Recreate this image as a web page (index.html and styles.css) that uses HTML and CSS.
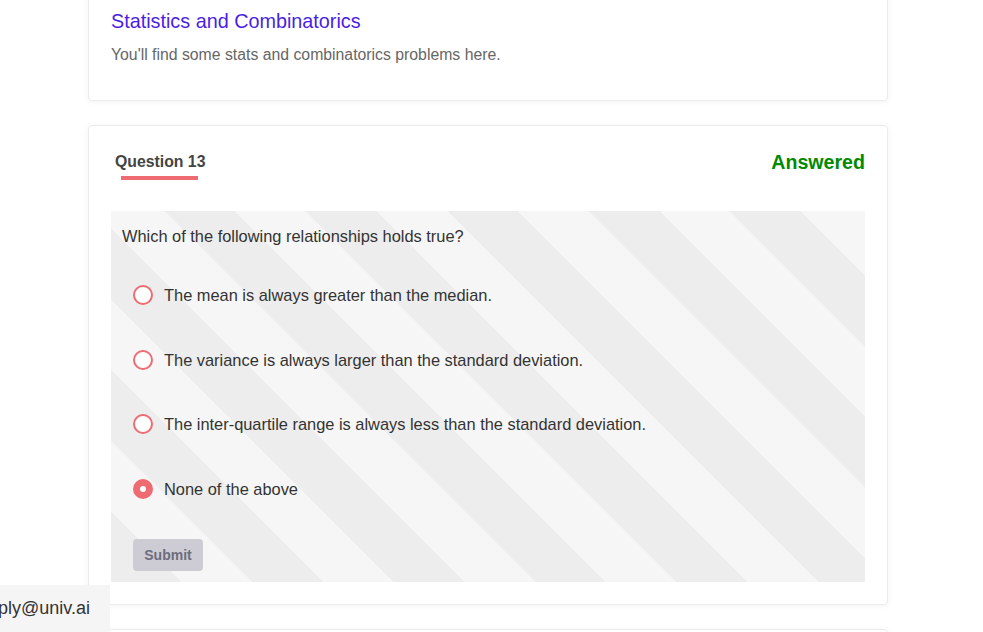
FILE: index.html
```html
<!DOCTYPE html>
<html lang="en">
<head>
<meta charset="utf-8">
<title>Statistics and Combinatorics</title>
<link rel="stylesheet" href="styles.css">
</head>
<body>
<main class="page">
  <section class="card intro">
    <h2 class="intro-title">Statistics and Combinatorics</h2>
    <p class="intro-desc">You'll find some stats and combinatorics problems here.</p>
  </section>

  <section class="card question-card">
    <header class="q-header">
      <div class="q-tab">
        <span class="q-label">Question 13</span>
        <span class="q-underline"></span>
      </div>
      <span class="q-status">Answered</span>
    </header>
    <div class="q-body">
      <p class="q-text">Which of the following relationships holds true?</p>
      <ul class="options">
        <li class="option"><span class="radio"></span><span>The mean is always greater than the median.</span></li>
        <li class="option"><span class="radio"></span><span>The variance is always larger than the standard deviation.</span></li>
        <li class="option"><span class="radio"></span><span>The inter-quartile range is always less than the standard deviation.</span></li>
        <li class="option"><span class="radio checked"></span><span>None of the above</span></li>
      </ul>
      <button class="submit" type="button">Submit</button>
    </div>
  </section>

  <section class="card next-card"></section>
</main>
<div class="contact"><span>noreply@univ.ai</span></div>
</body>
</html>
```

FILE: styles.css
```css
* { box-sizing: border-box; }
html, body { margin: 0; padding: 0; background: #fff; overflow: hidden; }
body {
  font-family: "Liberation Sans", Arial, sans-serif;
  color: #333;
  height: 632px;
}
.page {
  width: 800px;
  margin-left: 88px;
  display: flex;
  flex-direction: column;
  gap: 24px;
}
.card {
  background: #fff;
  border: 1px solid #ececec;
  border-radius: 4px;
  box-shadow: 0 1px 6px rgba(0, 0, 0, 0.05);
}
.intro {
  margin-top: -20px;
  padding: 28px 22px 35px;
}
.intro-title {
  margin: 0;
  font-size: 19.8px;
  line-height: 24px;
  font-weight: normal;
  color: #4a1ee6;
}
.intro-desc {
  margin: 12px 0 0;
  font-size: 15.8px;
  line-height: 20px;
  color: #666;
}
.question-card {
  padding: 26px 22px 22px;
}
.q-header {
  display: flex;
  justify-content: space-between;
  align-items: flex-start;
  margin-bottom: 31px;
}
.q-tab {
  display: flex;
  flex-direction: column;
  padding-left: 4px;
}
.q-label {
  font-size: 15.8px;
  line-height: 20px;
  font-weight: bold;
  color: #444;
}
.q-underline {
  display: block;
  margin: 4px 0 0 6px;
  width: 77px;
  height: 4px;
  background: #ef6b72;
}
.q-status {
  font-size: 19.6px;
  line-height: 20px;
  font-weight: bold;
  color: #008a00;
}
.q-body {
  padding: 15px 11px 11px;
  background: repeating-linear-gradient(45deg, #ededed 0 50px, #f6f6f6 50px 100px);
}
.q-text {
  margin: 0;
  font-size: 16.4px;
  line-height: 20px;
  color: #333;
}
.options {
  list-style: none;
  margin: 39px 0 0;
  padding: 0 0 0 11px;
  display: flex;
  flex-direction: column;
  gap: 44.6px;
}
.option {
  display: flex;
  align-items: center;
  gap: 11px;
  height: 20px;
  font-size: 16.4px;
  line-height: 20px;
  color: #333;
}
.radio {
  flex: none;
  width: 20px;
  height: 20px;
  border: 2px solid #ef6b72;
  border-radius: 50%;
  background: #fff;
  display: flex;
  align-items: center;
  justify-content: center;
}
.radio.checked {
  background: #ef6b72;
}
.radio.checked::after {
  content: "";
  width: 6px;
  height: 6px;
  border-radius: 50%;
  background: #fff;
}
.submit {
  display: block;
  margin: 40px 0 0 11px;
  width: 70px;
  height: 32px;
  border: none;
  border-radius: 4px;
  background: #cdccd4;
  color: #6d6c7c;
  font-family: "Liberation Sans", Arial, sans-serif;
  font-size: 14px;
  font-weight: bold;
  padding: 0;
}
.next-card {
  height: 60px;
}
.contact {
  position: fixed;
  left: 0;
  bottom: 0;
  width: 110px;
  height: 47px;
  background: #f5f5f5;
  overflow: hidden;
  display: flex;
  align-items: center;
  justify-content: flex-end;
  padding-right: 20px;
  white-space: nowrap;
  font-size: 18px;
  color: #333;
}
.contact span { flex: none; }
```
